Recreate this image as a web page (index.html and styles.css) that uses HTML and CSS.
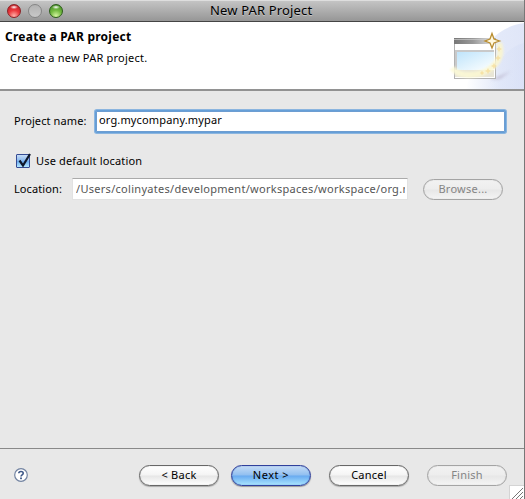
FILE: index.html
```html
<!DOCTYPE html>
<html lang="en">
<head>
<meta charset="utf-8">
<title>New PAR Project</title>
<link rel="stylesheet" href="styles.css">
</head>
<body>
<div class="window">
  <header class="titlebar">
    <div class="lights">
      <span class="light red"></span><span class="light gray"></span><span class="light green"></span>
    </div>
    <h1 class="title">New PAR Project</h1>
  </header>
  <section class="banner">
    <div class="banner-text">
      <h2 class="banner-title">Create a PAR project</h2>
      <p class="banner-desc">Create a new PAR project.</p>
    </div>
    <svg class="banner-art" width="76" height="67" viewBox="448 22 76 67">
      <defs>
        <linearGradient id="sweep" x1="0" x2="1" y1="0" y2="0"><stop offset="0" stop-color="#d5def5" stop-opacity="0"/><stop offset="1" stop-color="#d5def5"/></linearGradient>
        <linearGradient id="fade" x1="0" x2="1"><stop offset="0" stop-color="#dde5f8" stop-opacity="0"/><stop offset=".6" stop-color="#e3e9f9"/><stop offset="1" stop-color="#e0e6f8"/></linearGradient>
        <linearGradient id="bar" x1="0" x2="1"><stop offset="0" stop-color="#777"/><stop offset=".5" stop-color="#999"/><stop offset="1" stop-color="#ddd"/></linearGradient>
        <linearGradient id="sky" x1="0" x2=".9" y1="0" y2="1"><stop offset="0" stop-color="#bfe4fb"/><stop offset="1" stop-color="#fbfeff"/></linearGradient>
        <linearGradient id="arc" x1="0" x2="1"><stop offset="0" stop-color="#fdfbd8"/><stop offset="1" stop-color="#fcf6cc"/></linearGradient>
        <filter id="soft" x="-20%" y="-50%" width="140%" height="200%"><feGaussianBlur stdDeviation="1.500"/></filter>
        <filter id="glow"><feGaussianBlur stdDeviation="1"/></filter>
      </defs>
      <path d="M524 23C510 25 499 31 490 41C478 54 471 70 466 89H524Z" fill="url(#fade)"/>
      <path d="M524 43C508 47 496 60 487 89H524Z" fill="url(#sweep)" opacity=".5"/>
      <path d="M490 80L511 71L500 79Z" fill="#b9b4cb" opacity=".7" filter="url(#soft)"/>
      <rect x="454.500" y="38.500" width="41" height="40" fill="#fff" stroke="#b2b2b2"/>
      <rect x="454" y="38" width="38" height="6" fill="url(#bar)"/>
      <rect x="454" y="39" width="38" height="1" fill="#ccc" opacity=".7"/>
      <rect x="455" y="50" width="39" height="20" fill="#c9c9c9"/>
      <rect x="457" y="52" width="37" height="18" fill="url(#sky)"/>
      <rect x="455" y="70" width="39" height="7" fill="#e8e5d6"/>
      <path d="M499 43C505 62 488 75 469 75C461 75 456 73 452 68" fill="none" stroke="url(#arc)" stroke-width="6" opacity=".85" filter="url(#glow)"/>
      <path d="M499 46l1 2 2 1-2 1-1 2-1-2-2-1 2-1zM498 55l1 2 2 1-2 1-1 2-1-2-2-1 2-1zM494 63l1 2 2 1-2 1-1 2-1-2-2-1 2-1zM488 68l1 2 2 1-2 1-1 2-1-2-2-1 2-1zM482 71l1 1 1 1-1 1-1 1-1-1-1-1 1-1z" fill="#f5dd9c" opacity=".8"/>
      <path d="M492 33.500L494 39L499.500 41L494 43L492 48L490 43L485 41L490 39Z" fill="#fff8df" stroke="#b98d30" stroke-width="1.300"/>
    </svg>
  </section>
  <main class="form">
    <div class="row name-row">
      <label class="label t-name">Project name:</label>
      <div class="field focused"><span class="t-value">org.mycompany.mypar</span></div>
    </div>
    <div class="row check-row">
      <span class="checkbox">
        <svg class="tick" width="16" height="18" viewBox="0 0 16 18"><path d="M3.500 8.500L7 13.500L14 2" fill="none" stroke="#10182b" stroke-width="2.200"/></svg>
      </span>
      <span class="t-check">Use default location</span>
    </div>
    <div class="row location-row">
      <label class="label t-loc">Location:</label>
      <div class="field path"><span class="t-path">/Users/colinyates/development/workspaces/workspace/org.m</span></div>
      <button class="button disabled browse" disabled><span class="t-browse">Browse...</span></button>
    </div>
  </main>
  <footer class="footer">
    <svg class="help" width="14" height="14" viewBox="0 0 14 14"><circle cx="7" cy="7" r="6.300" fill="#fff" stroke="#7283a1" stroke-width="1.200"/><path d="M4.800 5.300C4.800 2.900 9.200 2.900 9.200 5.200C9.200 6.800 7 6.800 7 8.500" fill="none" stroke="#3c5686" stroke-width="1.600"/><rect x="6.100" y="9.500" width="1.800" height="1.700" fill="#3c5686"/></svg>
    <button class="button"><span class="t-back">&lt; Back</span></button>
    <button class="button primary"><span class="t-next">Next &gt;</span></button>
    <button class="button cancel"><span class="t-cancel">Cancel</span></button>
    <button class="button disabled finish" disabled><span class="t-finish">Finish</span></button>
    <svg class="grip" width="15" height="14" viewBox="0 0 15 14"><path d="M0 0H15V14H0Z" fill="#fff"/><path d="M0 .5H15M.5 0V14" stroke="#d4d4d4"/><path d="M3 14L14 3M7 14L14 7M11 14L14 11" stroke="#777"/></svg>
  </footer>
</div>
</body>
</html>
```
FILE: styles.css
```css
* { box-sizing: border-box; }
body { margin: 0; background: #e8e8e8; color: #000; font: 11px/14px "Noto Sans", "Open Sans", sans-serif; }
.window { width: 525px; height: 499px; display: flex; flex-direction: column; border-right: 1px solid #777; background: #e8e8e8; overflow: hidden; }
h1, h2, p { margin: 0; font-weight: normal; white-space: nowrap; }
span { white-space: nowrap; }

.titlebar { height: 22px; flex: none; display: flex; align-items: center; background: linear-gradient(#dedede 0 1px, #c4c4c4 1px, #969696 21px); border-bottom: 1px solid #444; }
.lights { width: 210px; padding-left: 7px; display: flex; gap: 7px; flex: none; }
.light { width: 14px; height: 14px; border-radius: 50%; border: 1px solid; }
.red { background: radial-gradient(ellipse 4px 2px at 50% 18%, #fff, transparent), radial-gradient(circle at 50% 90%, #ffb0a8, #ec3a3e 45%, #b5141c); border-color: #8c2226; }
.gray { background: linear-gradient(#b2b2b2, #c8c8c8); border-color: #858585; }
.green { background: radial-gradient(ellipse 4px 2px at 50% 18%, #fff, transparent), radial-gradient(circle at 50% 90%, #d5f5a0, #75bb42 45%, #3c821f); border-color: #2c5c1a; }
.title { margin-top: -1px; font-size: 13px; line-height: 20px; letter-spacing: 0.15px; text-shadow: 0 1px 0 #c4c4c4; }

.banner { height: 69px; flex: none; display: flex; justify-content: space-between; background: #fff; border-bottom: 2px solid #929292; }
.banner-text { padding: 8px 0 0 5px; }
.banner-title { font-size: 12px; font-weight: bold; line-height: 14px; letter-spacing: 0.25px; }
.banner-desc { margin: 7px 0 0 5px; letter-spacing: 0.22px; }

.form { flex: 1; padding: 18px 0 0 14px; }
.row { display: flex; align-items: center; }
.label { flex: none; letter-spacing: 0.1px; }
.name-row { height: 24px; }
.name-row .label { width: 82px; }
.field { background: #fff; display: flex; align-items: center; overflow: hidden; }
.focused { width: 409px; height: 21px; padding: 0 0 2px 2px; border: 1px solid #6d9dd1; box-shadow: 0 0 0 1px #659fd8, 0 0 0 2px #8bb5df; border-radius: 1px; letter-spacing: 0.15px; }
.check-row { margin-top: 19px; height: 18px; gap: 6px; padding-left: 2px; letter-spacing: 0.16px; }
.checkbox { width: 14px; height: 14px; border: 1px solid #354c94; background: linear-gradient(#c6dcf7, #84b6ee 50%, #68a8ed 51%, #b5e8ff); border-radius: 1px; }
.tick { display: block; margin: -3px 0 0 -1px; overflow: visible; }
.location-row { margin-top: 7px; height: 24px; }
.location-row .label { width: 58px; }
.path { width: 336px; height: 22px; border: 1px solid #e2e2e2; border-top-color: #aaa; padding: 0 2px 1px 3px; color: #555; letter-spacing: 0.29px; }
.t-path { min-width: 0; overflow: hidden; }
.button { width: 80px; height: 21px; padding: 0; flex: none; border: 1px solid #676767; border-radius: 11px; font: inherit; letter-spacing: 0.25px; color: #000; display: flex; justify-content: center; align-items: center; background: linear-gradient(#fff, #f4f4f4 48%, #e6e6e6 52%, #fff); box-shadow: 0 1px 1px #aaa, inset 0 0 1px #999; }
.primary { margin-left: 12px; border-color: #30409c; letter-spacing: 0.5px; background: linear-gradient(#c5dcf6, #91bff0 48%, #68aaf0 52%, #a9e4ff); box-shadow: 0 1px 1px #999, inset 0 0 1px #345eaf; }
.disabled { border-color: #a4a4a4; color: #858585; background: linear-gradient(#f2f2f2, #ededed 48%, #e7e7e7 52%, #f4f4f4); box-shadow: inset 0 0 1px #bbb; }
.browse { margin-left: 15px; }
.cancel, .finish { margin-left: 18px; }

.footer { position: relative; height: 51px; flex: none; border-top: 1px solid #898989; display: flex; align-items: center; padding: 2px 0 0 14px; }
.help { margin-right: 111px; }
.grip { position: absolute; right: 0; bottom: 0; }
```
